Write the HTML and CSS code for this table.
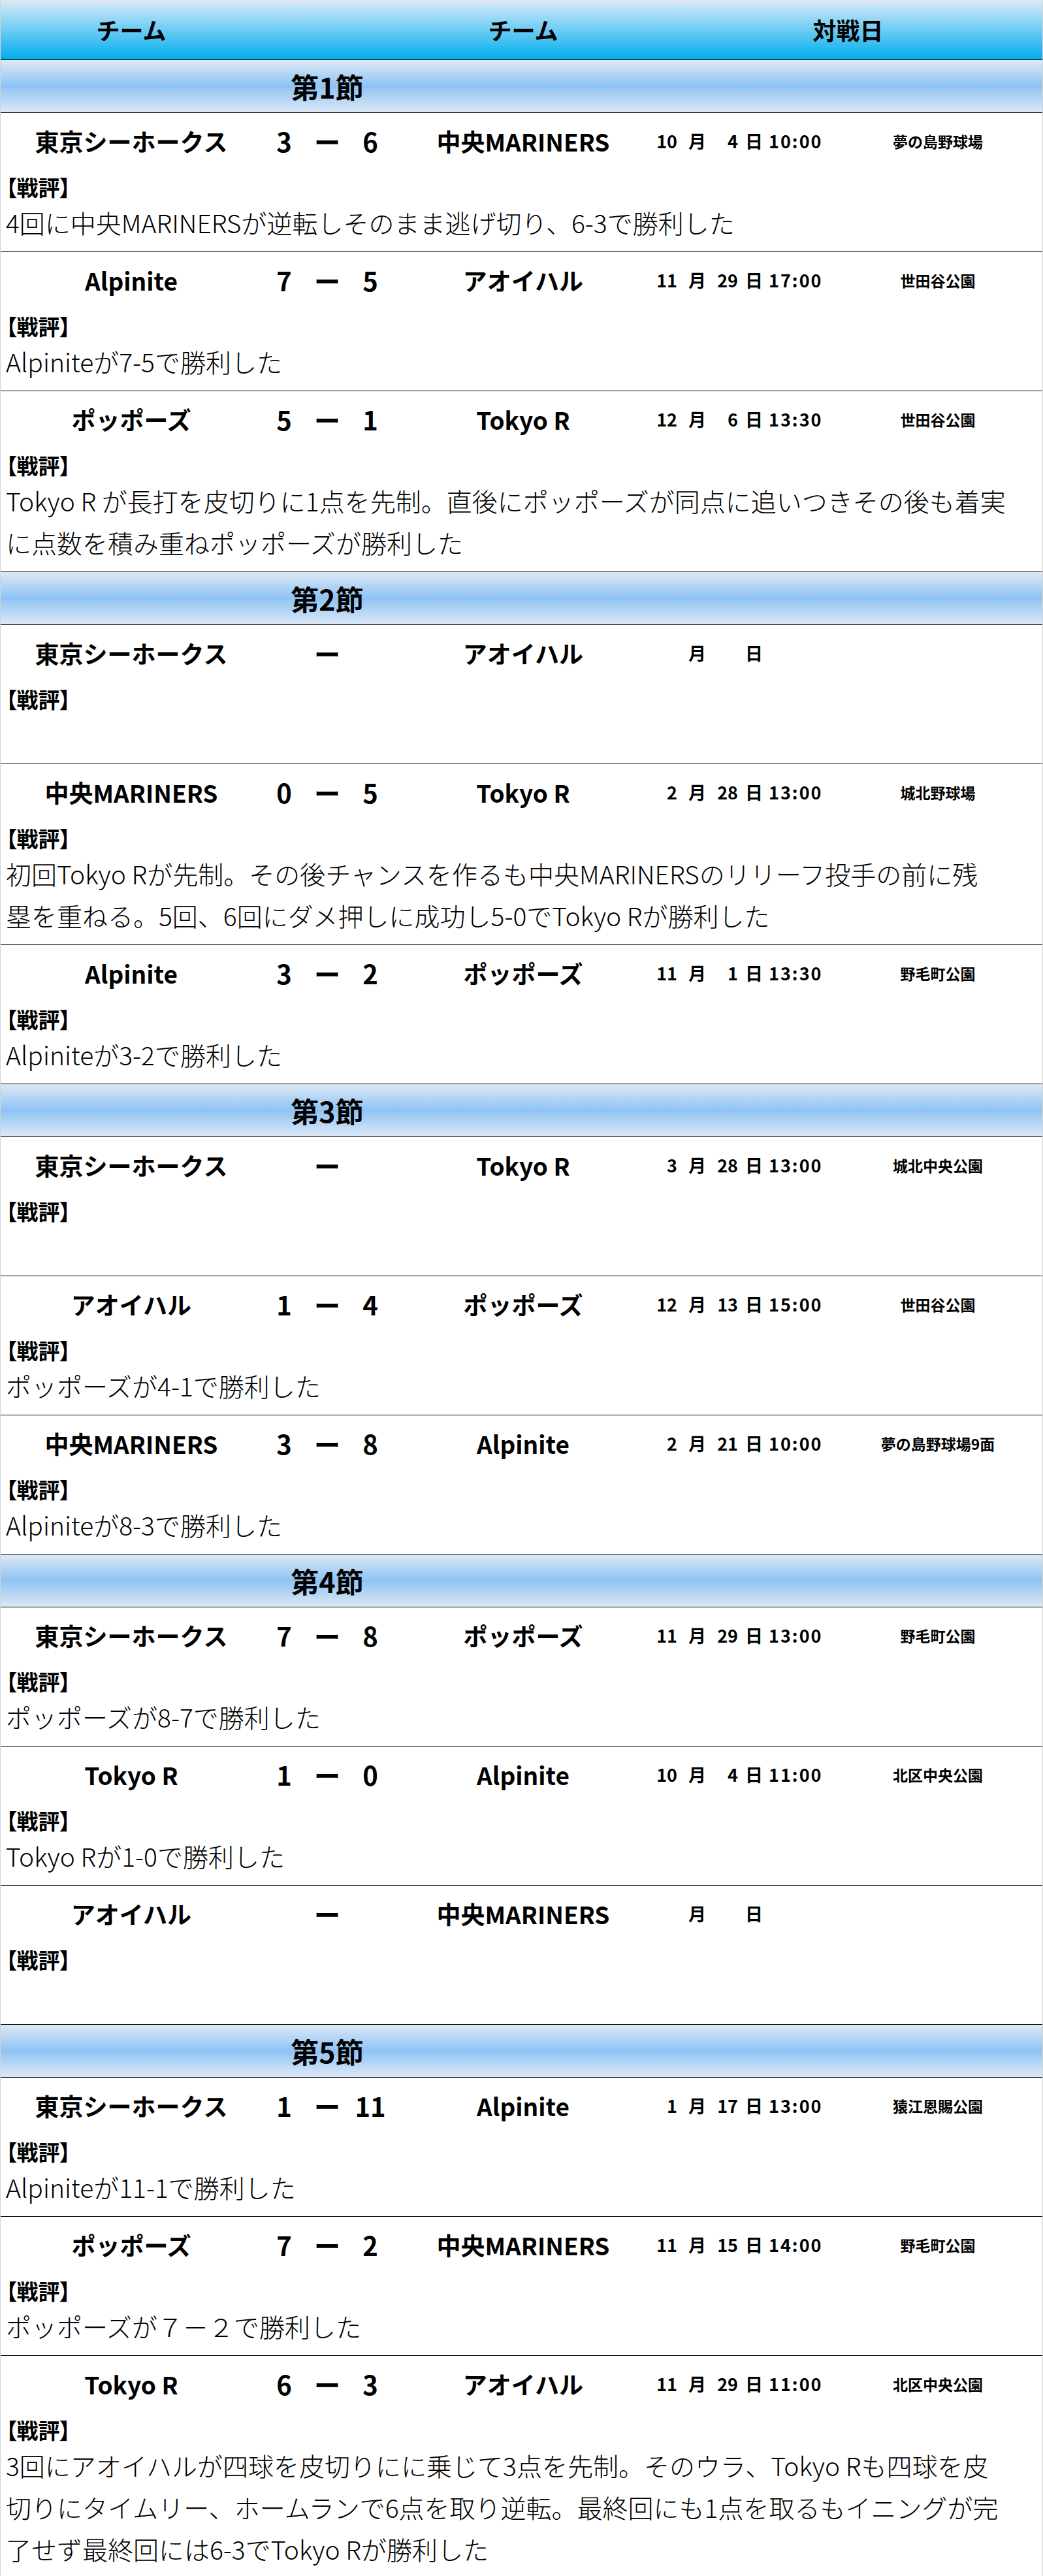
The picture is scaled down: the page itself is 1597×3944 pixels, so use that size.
FILE: index.html
```html
<!DOCTYPE html>
<html lang="ja">
<head>
<meta charset="utf-8">
<title>対戦表</title>
<link rel="stylesheet" href="styles.css">
</head>
<body>
<div class="schedule">
  <div class="head">
    <div class="h-cell">チーム</div>
    <div class="h-cell"></div>
    <div class="h-cell">チーム</div>
    <div class="h-cell">対戦日</div>
  </div>

  <section class="round">
    <h2 class="round-title"><span>第1節</span></h2>
    <article class="match">
      <div class="line">
        <div class="team">東京シーホークス</div>
        <div class="score"><span>3</span><span>ー</span><span>6</span></div>
        <div class="team">中央MARINERS</div>
        <div class="date"><span class="m">10</span><span class="u1">月</span><span class="d">4</span><span class="u2">日</span><span class="t">10:00</span></div>
        <div class="venue">夢の島野球場</div>
      </div>
      <div class="label">【戦評】</div>
      <p class="review">4回に中央MARINERSが逆転しそのまま逃げ切り、6-3で勝利した</p>
    </article>
    <article class="match">
      <div class="line">
        <div class="team">Alpinite</div>
        <div class="score"><span>7</span><span>ー</span><span>5</span></div>
        <div class="team">アオイハル</div>
        <div class="date"><span class="m">11</span><span class="u1">月</span><span class="d">29</span><span class="u2">日</span><span class="t">17:00</span></div>
        <div class="venue">世田谷公園</div>
      </div>
      <div class="label">【戦評】</div>
      <p class="review">Alpiniteが7-5で勝利した</p>
    </article>
    <article class="match">
      <div class="line">
        <div class="team">ポッポーズ</div>
        <div class="score"><span>5</span><span>ー</span><span>1</span></div>
        <div class="team">Tokyo R</div>
        <div class="date"><span class="m">12</span><span class="u1">月</span><span class="d">6</span><span class="u2">日</span><span class="t">13:30</span></div>
        <div class="venue">世田谷公園</div>
      </div>
      <div class="label">【戦評】</div>
      <p class="review">Tokyo R が長打を皮切りに1点を先制。直後にポッポーズが同点に追いつきその後も着実<br>に点数を積み重ねポッポーズが勝利した</p>
    </article>
  </section>

  <section class="round">
    <h2 class="round-title"><span>第2節</span></h2>
    <article class="match">
      <div class="line">
        <div class="team">東京シーホークス</div>
        <div class="score"><span></span><span>ー</span><span></span></div>
        <div class="team">アオイハル</div>
        <div class="date"><span class="m"></span><span class="u1">月</span><span class="d"></span><span class="u2">日</span><span class="t"></span></div>
        <div class="venue"></div>
      </div>
      <div class="label">【戦評】</div>
      <p class="review"></p>
    </article>
    <article class="match">
      <div class="line">
        <div class="team">中央MARINERS</div>
        <div class="score"><span>0</span><span>ー</span><span>5</span></div>
        <div class="team">Tokyo R</div>
        <div class="date"><span class="m">2</span><span class="u1">月</span><span class="d">28</span><span class="u2">日</span><span class="t">13:00</span></div>
        <div class="venue">城北野球場</div>
      </div>
      <div class="label">【戦評】</div>
      <p class="review">初回Tokyo Rが先制。その後チャンスを作るも中央MARINERSのリリーフ投手の前に残<br>塁を重ねる。5回、6回にダメ押しに成功し5-0でTokyo Rが勝利した</p>
    </article>
    <article class="match">
      <div class="line">
        <div class="team">Alpinite</div>
        <div class="score"><span>3</span><span>ー</span><span>2</span></div>
        <div class="team">ポッポーズ</div>
        <div class="date"><span class="m">11</span><span class="u1">月</span><span class="d">1</span><span class="u2">日</span><span class="t">13:30</span></div>
        <div class="venue">野毛町公園</div>
      </div>
      <div class="label">【戦評】</div>
      <p class="review">Alpiniteが3-2で勝利した</p>
    </article>
  </section>

  <section class="round">
    <h2 class="round-title"><span>第3節</span></h2>
    <article class="match">
      <div class="line">
        <div class="team">東京シーホークス</div>
        <div class="score"><span></span><span>ー</span><span></span></div>
        <div class="team">Tokyo R</div>
        <div class="date"><span class="m">3</span><span class="u1">月</span><span class="d">28</span><span class="u2">日</span><span class="t">13:00</span></div>
        <div class="venue">城北中央公園</div>
      </div>
      <div class="label">【戦評】</div>
      <p class="review"></p>
    </article>
    <article class="match">
      <div class="line">
        <div class="team">アオイハル</div>
        <div class="score"><span>1</span><span>ー</span><span>4</span></div>
        <div class="team">ポッポーズ</div>
        <div class="date"><span class="m">12</span><span class="u1">月</span><span class="d">13</span><span class="u2">日</span><span class="t">15:00</span></div>
        <div class="venue">世田谷公園</div>
      </div>
      <div class="label">【戦評】</div>
      <p class="review">ポッポーズが4-1で勝利した</p>
    </article>
    <article class="match">
      <div class="line">
        <div class="team">中央MARINERS</div>
        <div class="score"><span>3</span><span>ー</span><span>8</span></div>
        <div class="team">Alpinite</div>
        <div class="date"><span class="m">2</span><span class="u1">月</span><span class="d">21</span><span class="u2">日</span><span class="t">10:00</span></div>
        <div class="venue">夢の島野球場9面</div>
      </div>
      <div class="label">【戦評】</div>
      <p class="review">Alpiniteが8-3で勝利した</p>
    </article>
  </section>

  <section class="round">
    <h2 class="round-title"><span>第4節</span></h2>
    <article class="match">
      <div class="line">
        <div class="team">東京シーホークス</div>
        <div class="score"><span>7</span><span>ー</span><span>8</span></div>
        <div class="team">ポッポーズ</div>
        <div class="date"><span class="m">11</span><span class="u1">月</span><span class="d">29</span><span class="u2">日</span><span class="t">13:00</span></div>
        <div class="venue">野毛町公園</div>
      </div>
      <div class="label">【戦評】</div>
      <p class="review">ポッポーズが8-7で勝利した</p>
    </article>
    <article class="match">
      <div class="line">
        <div class="team">Tokyo R</div>
        <div class="score"><span>1</span><span>ー</span><span>0</span></div>
        <div class="team">Alpinite</div>
        <div class="date"><span class="m">10</span><span class="u1">月</span><span class="d">4</span><span class="u2">日</span><span class="t">11:00</span></div>
        <div class="venue">北区中央公園</div>
      </div>
      <div class="label">【戦評】</div>
      <p class="review">Tokyo Rが1-0で勝利した</p>
    </article>
    <article class="match">
      <div class="line">
        <div class="team">アオイハル</div>
        <div class="score"><span></span><span>ー</span><span></span></div>
        <div class="team">中央MARINERS</div>
        <div class="date"><span class="m"></span><span class="u1">月</span><span class="d"></span><span class="u2">日</span><span class="t"></span></div>
        <div class="venue"></div>
      </div>
      <div class="label">【戦評】</div>
      <p class="review"></p>
    </article>
  </section>

  <section class="round">
    <h2 class="round-title"><span>第5節</span></h2>
    <article class="match">
      <div class="line">
        <div class="team">東京シーホークス</div>
        <div class="score"><span>1</span><span>ー</span><span>11</span></div>
        <div class="team">Alpinite</div>
        <div class="date"><span class="m">1</span><span class="u1">月</span><span class="d">17</span><span class="u2">日</span><span class="t">13:00</span></div>
        <div class="venue">猿江恩賜公園</div>
      </div>
      <div class="label">【戦評】</div>
      <p class="review">Alpiniteが11-1で勝利した</p>
    </article>
    <article class="match">
      <div class="line">
        <div class="team">ポッポーズ</div>
        <div class="score"><span>7</span><span>ー</span><span>2</span></div>
        <div class="team">中央MARINERS</div>
        <div class="date"><span class="m">11</span><span class="u1">月</span><span class="d">15</span><span class="u2">日</span><span class="t">14:00</span></div>
        <div class="venue">野毛町公園</div>
      </div>
      <div class="label">【戦評】</div>
      <p class="review">ポッポーズが７－２で勝利した</p>
    </article>
    <article class="match">
      <div class="line">
        <div class="team">Tokyo R</div>
        <div class="score"><span>6</span><span>ー</span><span>3</span></div>
        <div class="team">アオイハル</div>
        <div class="date"><span class="m">11</span><span class="u1">月</span><span class="d">29</span><span class="u2">日</span><span class="t">11:00</span></div>
        <div class="venue">北区中央公園</div>
      </div>
      <div class="label">【戦評】</div>
      <p class="review">3回にアオイハルが四球を皮切りにに乗じて3点を先制。そのウラ、Tokyo Rも四球を皮<br>切りにタイムリー、ホームランで6点を取り逆転。最終回にも1点を取るもイニングが完<br>了せず最終回には6-3でTokyo Rが勝利した</p>
    </article>
  </section>
</div>
</body>
</html>
```

FILE: styles.css
```css
* {
  box-sizing: border-box;
}

html, body {
  margin: 0;
  padding: 0;
  background: #ffffff;
}

body {
  font-family: "Noto Sans CJK JP", "Noto Sans", sans-serif;
  color: #000;
}

.schedule {
  width: 1597px;
  border-left: 1px solid #d2d2d2;
  border-right: 1px solid #d2d2d2;
  border-top: 3px solid #e1e3e6;
}

.head {
  display: grid;
  grid-template-columns: 400px 200px 400px 1fr;
  height: 89px;
  border-bottom: 1px solid #000;
  background: linear-gradient(#d3e9f8, #00adef);
}

.h-cell {
  display: flex;
  align-items: center;
  justify-content: center;
  font-size: 36px;
  font-weight: 700;
  padding-bottom: 4px;
}

.round-title {
  margin: 0;
  height: 81px;
  border-bottom: 1px solid #000;
  background: linear-gradient(#dde9f6, #8fc3f4 50%, #dde9f6);
  display: flex;
  align-items: center;
  font-size: 43px;
  font-weight: 700;
}

.round-title span {
  width: 1000px;
  text-align: center;
}

.match {
  border-bottom: 1px solid #000;
  padding-bottom: 13px;
}

.line {
  display: grid;
  grid-template-columns: 400px 200px 400px 275px 1fr;
  height: 85px;
  align-items: center;
}

.team {
  text-align: center;
  font-size: 37px;
  font-weight: 700;
}

.score {
  display: flex;
  justify-content: center;
  font-size: 40px;
  font-weight: 700;
}

.score span {
  width: 66px;
  text-align: center;
}

.date {
  display: flex;
  align-items: baseline;
  font-size: 27px;
  font-weight: 700;
}

.date .m {
  width: 36px;
  text-align: right;
}

.date .u1 {
  margin-left: 17px;
  width: 28px;
}

.date .d {
  width: 48px;
  text-align: right;
}

.date .u2 {
  margin-left: 11px;
  width: 28px;
}

.date .t {
  margin-left: 8px;
  letter-spacing: 2px;
}

.venue {
  text-align: center;
  font-size: 23px;
  font-weight: 700;
}

.label {
  padding: 6px 0 0 8px;
  height: 50px;
  line-height: 44px;
  font-size: 33px;
  font-weight: 700;
  font-feature-settings: "palt";
}

.review {
  margin: 0;
  padding-left: 8px;
  min-height: 64px;
  font-size: 39px;
  line-height: 64px;
  font-weight: 300;
  white-space: nowrap;
}
```
